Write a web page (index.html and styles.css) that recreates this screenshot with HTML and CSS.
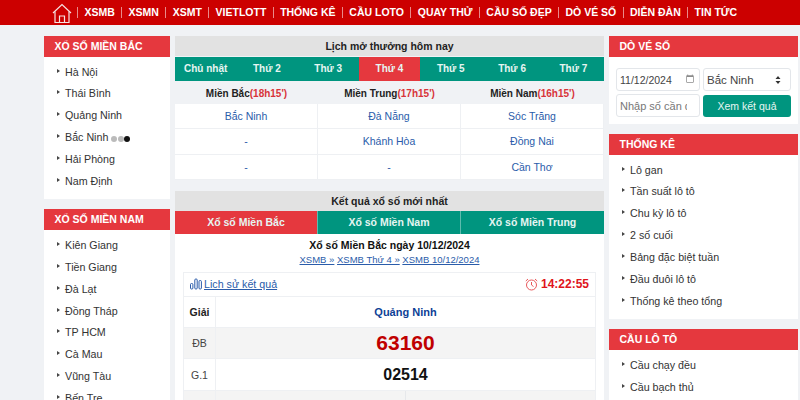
FILE: index.html
```html
<!DOCTYPE html>
<html lang="vi">
<head>
<meta charset="utf-8">
<title>Xổ số</title>
<link rel="stylesheet" href="styles.css">
</head>
<body>
<nav class="topnav">
  <a class="home" href="#"><svg width="20" height="20" viewBox="0 0 20 20" fill="none" stroke="#f6e3e3" stroke-width="1.2"><path d="M1 10 L10 1.5 L19 10"/><path d="M3 8.5 V19.5 H17 V8.5"/><path d="M7.5 19.5 V13 H12.5 V19.5"/></svg></a>
  <a href="#">XSMB</a><a href="#">XSMN</a><a href="#">XSMT</a><a href="#">VIETLOTT</a><a href="#">THỐNG KÊ</a><a href="#">CẦU LOTO</a><a href="#">QUAY THỬ</a><a href="#">CẦU SỐ ĐẸP</a><a href="#">DÒ VÉ SỐ</a><a href="#">DIỄN ĐÀN</a><a href="#">TIN TỨC</a>
</nav>
<main class="layout">
  <aside class="col">
    <section class="card">
      <h3 class="card-head">XỔ SỐ MIỀN BẮC</h3>
      <ul class="menu">
        <li>Hà Nội</li><li>Thái Bình</li><li>Quảng Ninh</li>
        <li>Bắc Ninh <span class="dots"><i></i><i></i><i class="on"></i></span></li>
        <li>Hải Phòng</li><li>Nam Định</li>
      </ul>
    </section>
    <section class="card">
      <h3 class="card-head">XỔ SỐ MIỀN NAM</h3>
      <ul class="menu">
        <li>Kiên Giang</li><li>Tiền Giang</li><li>Đà Lạt</li><li>Đồng Tháp</li><li>TP HCM</li><li>Cà Mau</li><li>Vũng Tàu</li><li>Bến Tre</li>
      </ul>
    </section>
  </aside>

  <div class="col">
    <section>
      <h2 class="title">Lịch mở thưởng hôm nay</h2>
      <div class="days">
        <span>Chủ nhật</span><span>Thứ 2</span><span>Thứ 3</span><span class="active">Thứ 4</span><span>Thứ 5</span><span>Thứ 6</span><span>Thứ 7</span>
      </div>
      <div class="regions">
        <span>Miền Bắc<em>(18h15')</em></span><span>Miền Trung<em>(17h15')</em></span><span>Miền Nam<em>(16h15')</em></span>
      </div>
      <div class="sched">
        <a href="#">Bắc Ninh</a><a href="#">Đà Nẵng</a><a href="#">Sóc Trăng</a>
        <a href="#">-</a><a href="#">Khánh Hòa</a><a href="#">Đồng Nai</a>
        <a href="#">-</a><a href="#">-</a><a href="#">Cần Thơ</a>
      </div>
    </section>
    <section class="latest">
      <h2 class="title">Kết quả xổ số mới nhất</h2>
      <div class="tabs">
        <span class="active">Xổ số Miền Bắc</span><span>Xổ số Miền Nam</span><span>Xổ số Miền Trung</span>
      </div>
      <div class="result">
        <h4 class="result-title">Xổ số Miền Bắc ngày 10/12/2024</h4>
        <p class="crumbs"><a href="#">XSMB »</a> <a href="#">XSMB Thứ 4 »</a> <a href="#">XSMB 10/12/2024</a></p>
        <div class="box">
          <div class="box-top">
            <a class="history" href="#"><svg width="12" height="12" viewBox="0 0 12 12" fill="none" stroke="#2a5caa" stroke-width="1"><rect x="0.5" y="5.5" width="2.4" height="5.5" rx="1"/><rect x="4.8" y="1" width="2.4" height="10" rx="1"/><rect x="9" y="2.5" width="2.4" height="8.5" rx="1"/></svg><span>Lịch sử kết quả</span></a>
            <span class="clock"><svg width="13" height="13" viewBox="0 0 13 13" fill="none" stroke="#e8595c" stroke-width="1"><circle cx="6.5" cy="7" r="5"/><path d="M6.5 4 V7 L8.5 8.5"/><path d="M0.8 3 L3 1 M12.2 3 L10 1"/></svg>14:22:55</span>
          </div>
          <div class="row head"><span class="prize">Giải</span><span class="val prov">Quảng Ninh</span></div>
          <div class="row alt"><span class="prize thin">ĐB</span><span class="val big">63160</span></div>
          <div class="row"><span class="prize thin">G.1</span><span class="val num">02514</span></div>
          <div class="row alt split"><span class="prize"></span><span class="val half"></span><span class="val"></span></div>
        </div>
      </div>
    </section>
  </div>

  <aside class="col">
    <section class="card">
      <h3 class="card-head">DÒ VÉ SỐ</h3>
      <form class="form">
        <input class="field date" type="date" value="2024-11-12">
        <select class="field pick"><option>Bắc Ninh</option></select>
        <input class="field text" type="text" placeholder="Nhập số cần dò">
        <button class="submit" type="button">Xem kết quả</button>
      </form>
    </section>
    <section class="card">
      <h3 class="card-head">THỐNG KÊ</h3>
      <ul class="menu">
        <li>Lô gan</li><li>Tần suất lô tô</li><li>Chu kỳ lô tô</li><li>2 số cuối</li><li>Bảng đặc biệt tuần</li><li>Đầu đuôi lô tô</li><li>Thống kê theo tổng</li>
      </ul>
    </section>
    <section class="card">
      <h3 class="card-head">CẦU LÔ TÔ</h3>
      <ul class="menu">
        <li>Cầu chạy đều</li><li>Cầu bạch thủ</li>
      </ul>
    </section>
  </aside>
</main>
</body>
</html>
```
FILE: styles.css
```css
* { box-sizing: border-box; }
html, body { height: 400px; }
body {
  margin: 0;
  overflow: hidden;
  background: #f0f2f5;
  font-family: "Liberation Sans", Arial, sans-serif;
  font-size: 11px;
  color: #222;
}
a { text-decoration: none; color: inherit; }
ul, h2, h3, h4, p { margin: 0; padding: 0; }

.topnav {
  display: flex;
  align-items: center;
  height: 25px;
  padding-left: 52px;
  background: #cc0000;
}
.topnav a {
  display: flex;
  align-items: center;
  height: 11px;
  padding: 0 6.4px;
  border-left: 1px solid #e98a8a;
  color: #fff;
  font-size: 10.5px;
  font-weight: 700;
  line-height: 11px;
  white-space: nowrap;
}
.topnav .home {
  height: 20px;
  padding: 0;
  margin-right: 5px;
  border: 0;
}

.layout {
  display: grid;
  grid-template-columns: 126px 429px 189px;
  column-gap: 5px;
  padding: 11px 0 0 44px;
}
.col { display: flex; flex-direction: column; min-width: 0; }

.card { background: #fff; margin-bottom: 10px; }
.card-head {
  height: 21px;
  padding-left: 10.5px;
  background: #e5383e;
  color: #fff;
  font-size: 10.5px;
  font-weight: 700;
  line-height: 21px;
}
.menu { list-style: none; padding: 3.6px 0 7.4px 21px; }
.menu li {
  position: relative;
  height: 21.9px;
  line-height: 22px;
  color: #333;
  font-size: 10.7px;
  white-space: nowrap;
}
.menu li::before {
  content: "";
  position: absolute;
  left: -8px;
  top: 8px;
  border-left: 3px solid #444;
  border-top: 2.5px solid transparent;
  border-bottom: 2.5px solid transparent;
}
.dots { display: inline-flex; gap: 0.5px; vertical-align: -0.5px; }
.dots i { width: 6px; height: 6px; border-radius: 50%; background: #bbb; }
.dots i.on { background: #111; }

.title {
  height: 20px;
  margin-bottom: 1px;
  background: #e2e2e2;
  color: #222;
  font-size: 10.5px;
  font-weight: 700;
  line-height: 20px;
  text-align: center;
}
.days {
  display: grid;
  grid-template-columns: repeat(7, 1fr);
  height: 24px;
  background: #00957f;
}
.days span {
  color: #e6f5f2;
  font-size: 10px;
  font-weight: 700;
  line-height: 24px;
  text-align: center;
}
.days .active { background: #e5383e; }
.regions {
  display: grid;
  grid-template-columns: repeat(3, 1fr);
  height: 23px;
  font-size: 10px;
  font-weight: 700;
  line-height: 26px;
  text-align: center;
}
.regions em { color: #d8343a; font-style: normal; }
.sched {
  display: grid;
  grid-template-columns: repeat(3, 1fr);
  grid-auto-rows: 25.3px;
  background: #fff;
}
.sched a {
  border-right: 1px solid #eef0f3;
  border-bottom: 1px solid #eef0f3;
  color: #2a5caa;
  font-size: 10.5px;
  line-height: 24px;
  text-align: center;
}
.latest { margin-top: 11px; }
.tabs {
  display: grid;
  grid-template-columns: repeat(3, 1fr);
  height: 23px;
  margin-top: -1px;
  background: #00957f;
}
.tabs span {
  border-right: 1px solid #5dbcae;
  color: #e6f5f2;
  font-size: 10.5px;
  font-weight: 700;
  line-height: 23px;
  text-align: center;
}
.tabs span:last-child { border-right: 0; }
.tabs .active { background: #e5383e; }
.result { background: #fff; padding: 4px 8px 0; height: 200px; }
.result-title {
  height: 14px;
  color: #111;
  font-size: 10.5px;
  font-weight: 700;
  line-height: 14px;
  text-align: center;
}
.crumbs {
  height: 16px;
  color: #2a5caa;
  font-size: 9.5px;
  line-height: 15px;
  text-align: center;
}
.crumbs a { text-decoration: underline; }
.box { margin-top: 4px; border: 1px solid #eef0f3; }
.box-top {
  display: flex;
  align-items: center;
  justify-content: space-between;
  height: 24px;
  padding: 0 6px 0 6px;
  border-bottom: 1px solid #eef0f3;
}
.history { display: flex; align-items: center; gap: 2px; color: #2a5caa; font-size: 10.7px; text-decoration: underline; }
.clock { display: flex; align-items: center; gap: 3px; color: #e0141b; font-size: 12px; font-weight: 700; }
.row { display: flex; height: 31.3px; border-bottom: 1px solid #eef0f3; }
.row.alt { background: #f4f4f4; }
.prize {
  display: flex;
  align-items: center;
  justify-content: center;
  flex: 0 0 32px;
  border-right: 1px solid #eef0f3;
  color: #222;
  font-size: 10.5px;
  font-weight: 700;
}
.prize.thin { color: #444; font-weight: 400; }
.val { display: flex; align-items: center; justify-content: center; flex: 1; }
.half { border-right: 1px solid #e6e8eb; }
.prov { color: #0e3f96; font-size: 11px; font-weight: 700; }
.big { color: #c00000; font-size: 21px; font-weight: 700; }
.num { color: #111; font-size: 16px; font-weight: 700; }

.form {
  display: grid;
  grid-template-columns: 84px 88px;
  grid-auto-rows: 23px;
  gap: 3px;
  height: 67px;
  padding: 11px 7px 0;
}
.field {
  width: 100%;
  min-width: 0;
  height: 23px;
  padding: 0 3px;
  border: 1px solid #e3e6ea;
  border-radius: 3px;
  background: #fff;
  color: #444;
  font-family: inherit;
  font-size: 10.5px;
  outline: 0;
}
.field::placeholder { color: #777; }
.date::-webkit-datetime-edit-month-field,
.date::-webkit-datetime-edit-day-field,
.date::-webkit-datetime-edit-year-field { padding: 0; }
.date::-webkit-calendar-picker-indicator { opacity: 0.45; margin: 0; padding: 0 1px 0 0; }
.text { padding-right: 12px; font-size: 11px; }
.pick {
  appearance: none;
  font-size: 11.5px;
  background-image: url("data:image/svg+xml,%3Csvg xmlns='http://www.w3.org/2000/svg' width='6' height='8'%3E%3Cpath d='M3 0L5.5 3H.5zM3 8L.5 5h5z' fill='%23333'/%3E%3C/svg%3E");
  background-repeat: no-repeat;
  background-position: right 9px center;
}
.submit {
  height: 22px;
  margin-top: 1px;
  border: 0;
  border-radius: 3px;
  background: #00957f;
  color: #e6f5f2;
  font-family: inherit;
  font-size: 10.5px;
}
```
